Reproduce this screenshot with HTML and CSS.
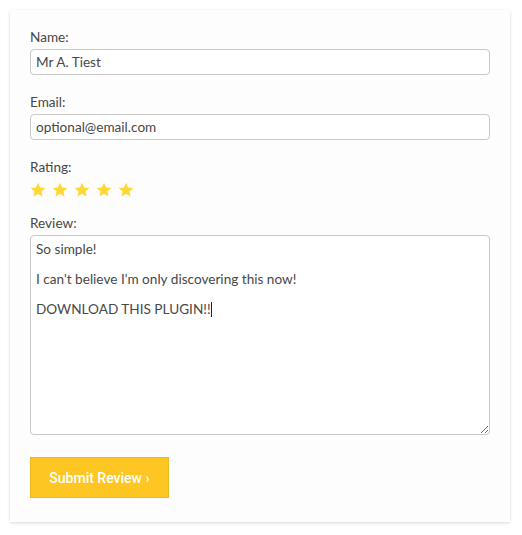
FILE: index.html
```html
<!DOCTYPE html>
<html>
<head>
<meta charset="utf-8">
<link rel="stylesheet" href="styles.css">
</head>
<body>
<form class="card">
  <div class="group">
    <label class="label">Name:</label>
    <input class="field" type="text" value="Mr A. Tiest">
  </div>
  <div class="group">
    <label class="label">Email:</label>
    <input class="field" type="text" value="optional@email.com">
  </div>
  <div class="group rating">
    <label class="label">Rating:</label>
    <div class="stars">
      <svg viewBox="0 0 24 24"><path d="M12 1l3.2 7.2 7.8.7-5.9 5.2 1.8 7.7L12 17.8 5.1 21.8l1.8-7.7L1 8.9l7.8-.7z"/></svg>
      <svg viewBox="0 0 24 24"><path d="M12 1l3.2 7.2 7.8.7-5.9 5.2 1.8 7.7L12 17.8 5.1 21.8l1.8-7.7L1 8.9l7.8-.7z"/></svg>
      <svg viewBox="0 0 24 24"><path d="M12 1l3.2 7.2 7.8.7-5.9 5.2 1.8 7.7L12 17.8 5.1 21.8l1.8-7.7L1 8.9l7.8-.7z"/></svg>
      <svg viewBox="0 0 24 24"><path d="M12 1l3.2 7.2 7.8.7-5.9 5.2 1.8 7.7L12 17.8 5.1 21.8l1.8-7.7L1 8.9l7.8-.7z"/></svg>
      <svg viewBox="0 0 24 24"><path d="M12 1l3.2 7.2 7.8.7-5.9 5.2 1.8 7.7L12 17.8 5.1 21.8l1.8-7.7L1 8.9l7.8-.7z"/></svg>
    </div>
  </div>
  <div class="group">
    <label class="label">Review:</label>
    <div class="area"><p>So simple!</p><p>I can't believe I'm only discovering this now!</p><p>DOWNLOAD THIS PLUGIN!!<span class="caret"></span></p></div>
  </div>
  <button class="submit" type="button">Submit Review ›</button>
</form>
</body>
</html>
```
FILE: styles.css
```css
html, body {
  margin: 0;
  padding: 0;
  background: #ffffff;
}
body {
  padding: 10px 12px 13px 10px;
  font-family: "Lato", "Open Sans", sans-serif;
  font-size: 13.6px;
  color: #484848;
}
.card {
  width: 500px;
  box-sizing: border-box;
  background: #fdfdfd;
  box-shadow: 0 1px 3px rgba(0, 0, 0, 0.16);
  padding: 19px 20px 24px 20px;
  display: flex;
  flex-direction: column;
}
.group {
  display: flex;
  flex-direction: column;
  margin-bottom: 19px;
}
.label {
  line-height: 16px;
  margin-bottom: 4px;
}
.field {
  height: 26px;
  box-sizing: border-box;
  border: 1px solid #c8c8c8;
  border-radius: 4px;
  padding: 0 5px;
  font-family: inherit;
  font-size: 13.6px;
  color: #484848;
  background: #fff;
  outline: none;
}
.rating {
  margin-bottom: 17px;
}
.stars {
  display: flex;
  gap: 6px;
  margin-top: 3px;
  height: 16px;
}
.stars svg {
  width: 16px;
  height: 16px;
  fill: #fdd835;
}
.area {
  height: 200px;
  box-sizing: border-box;
  border: 1px solid #c8c8c8;
  border-radius: 4px;
  padding: 6px 5px;
  background: #fff;
  overflow: auto;
  resize: vertical;
  line-height: 15px;
}
.area p {
  margin: 0 0 15px 0;
}
.caret {
  display: inline-block;
  width: 1px;
  height: 15px;
  background: #222;
  vertical-align: -3px;
}
.submit {
  margin-top: 3px;
  align-self: flex-start;
  width: 139px;
  height: 41px;
  background: #fdc623;
  border: 1px solid #ecb822;
  color: #ffffff;
  font-family: "Roboto", "Liberation Sans", sans-serif;
  font-weight: 500;
  font-size: 14px;
  cursor: pointer;
}
```
